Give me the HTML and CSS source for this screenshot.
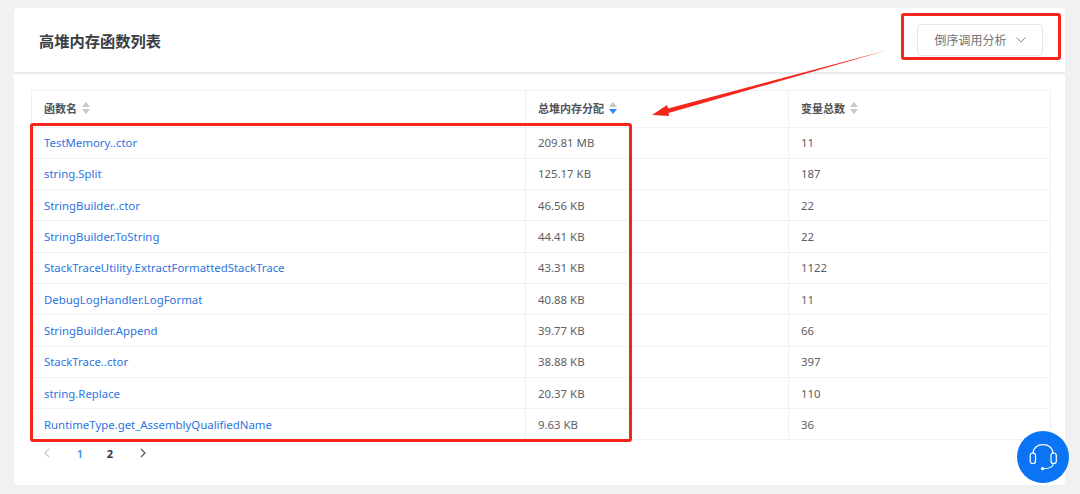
FILE: index.html
```html
<!DOCTYPE html>
<html lang="zh">
<head>
<meta charset="utf-8">
<title>高堆内存函数列表</title>
<link rel="stylesheet" href="styles.css">
</head>
<body>
<main class="card">
  <header class="card-head">
    <h1 class="title">高堆内存函数列表</h1>
    <button class="select" type="button">倒序调用分析
      <svg class="chev" width="10" height="6" viewBox="0 0 10 6"><path d="M.5.5 5 5 9.5.5" fill="none" stroke="#8a8a8a"/></svg>
    </button>
  </header>
  <section class="card-body">
    <table class="table">
      <thead>
        <tr>
          <th class="col-a"><span class="th">函数名<svg class="sort" width="8" height="12" viewBox="0 0 8 12"><path d="M4 0 8 5H0z" fill="#c5c8ce"/><path d="M4 12 0 7h8z" fill="#c5c8ce"/></svg></span></th>
          <th class="col-b"><span class="th">总堆内存分配<svg class="sort" width="8" height="12" viewBox="0 0 8 12"><path d="M4 0 8 5H0z" fill="#c5c8ce"/><path d="M4 12 0 7h8z" fill="#2f86f6"/></svg></span></th>
          <th><span class="th">变量总数<svg class="sort" width="8" height="12" viewBox="0 0 8 12"><path d="M4 0 8 5H0z" fill="#c5c8ce"/><path d="M4 12 0 7h8z" fill="#c5c8ce"/></svg></span></th>
        </tr>
      </thead>
      <tbody>
        <tr><td><a href="#">TestMemory..ctor</a></td><td>209.81 MB</td><td>11</td></tr>
        <tr><td><a href="#">string.Split</a></td><td>125.17 KB</td><td>187</td></tr>
        <tr><td><a href="#">StringBuilder..ctor</a></td><td>46.56 KB</td><td>22</td></tr>
        <tr><td><a href="#">StringBuilder.ToString</a></td><td>44.41 KB</td><td>22</td></tr>
        <tr><td><a href="#">StackTraceUtility.ExtractFormattedStackTrace</a></td><td>43.31 KB</td><td>1122</td></tr>
        <tr><td><a href="#">DebugLogHandler.LogFormat</a></td><td>40.88 KB</td><td>11</td></tr>
        <tr><td><a href="#">StringBuilder.Append</a></td><td>39.77 KB</td><td>66</td></tr>
        <tr><td><a href="#">StackTrace..ctor</a></td><td>38.88 KB</td><td>397</td></tr>
        <tr><td><a href="#">string.Replace</a></td><td>20.37 KB</td><td>110</td></tr>
        <tr><td><a href="#">RuntimeType.get_AssemblyQualifiedName</a></td><td>9.63 KB</td><td>36</td></tr>
      </tbody>
    </table>
    <nav class="pager">
      <span class="page"><svg width="6" height="10" viewBox="0 0 6 10"><path d="M5 1 1 5l4 4" fill="none" stroke="#c4c8cf" stroke-width="1.2"/></svg></span>
      <span class="page num current">1</span>
      <span class="page num strong">2</span>
      <span class="page"><svg width="6" height="10" viewBox="0 0 6 10"><path d="m1 1 4 4-4 4" fill="none" stroke="#555" stroke-width="1.2"/></svg></span>
    </nav>
  </section>
</main>

<div class="mark mark-table"></div>
<div class="mark mark-select"></div>
<svg class="arrow" width="250" height="76" viewBox="0 0 250 76"><path d="M238 2 18 60.500 17 57 2 67 19 68 18.500 65z" fill="#f6261c"/></svg>

<button class="fab" type="button" aria-label="客服">
  <svg width="30" height="30" viewBox="0 0 30 30" fill="none" stroke="#fff" stroke-width="1.200">
    <path d="M5 11.500C5 6 9.500 2.700 15 2.700S25 6 25 11.500"/>
    <rect x="2.200" y="11" width="5.300" height="10.500" rx="2.600"/>
    <rect x="23" y="11" width="5.300" height="10.500" rx="2.600"/>
    <path d="M25.500 21.500c-.5 3.500-4.500 5.200-10.500 5.200"/>
    <circle cx="14.500" cy="26.700" r="1" fill="#fff"/>
  </svg>
</button>
</body>
</html>
```
FILE: styles.css
```css
* { box-sizing: border-box; }
html, body { margin: 0; height: 100%; }
body {
  position: relative;
  padding: 8px 15px 9px 14px;
  background: #f1f1f2;
  font-family: "Noto Sans", "Noto Sans CJK SC", sans-serif;
  font-size: 11.400px;
  color: #5c6066;
  overflow: hidden;
}
.card {
  height: 477px;
  background: #fff;
  border-radius: 4px;
}
.card-head {
  height: 66px;
  padding: 0 22px 0 25px;
  display: flex;
  align-items: center;
  justify-content: space-between;
  border-bottom: 2px solid #e9eaec;
}
.title {
  margin: 0;
  font-size: 15.250px;
  font-weight: 700;
  color: #3a3e44;
}
.select {
  width: 126px;
  height: 32px;
  display: flex;
  align-items: center;
  justify-content: center;
  gap: 9px;
  background: #fff;
  border: 1px solid #e6e7ea;
  border-radius: 3px;
  font: inherit;
  font-size: 12px;
  color: #70747a;
}
.card-body { padding: 16px 14px 0 17px; }
.table {
  width: 1020px;
  table-layout: fixed;
  border-collapse: collapse;
}
.table th, .table td {
  border: 1px solid #f0f1f6;
  padding: 0 12px;
  text-align: left;
}
.table th {
  height: 36.500px;
  padding-bottom: 1px;
  font-weight: 700;
  font-size: 11px;
  color: #50545a;
}
.table td { height: 31.300px; }
.col-a { width: 494px; }
.col-b { width: 263px; }
.th { display: inline-flex; align-items: center; gap: 5px; }
.table a { color: #2b74e2; text-decoration: none; }
.pager { display: flex; height: 26px; align-items: center; }
.page {
  width: 32px;
  display: flex;
  justify-content: center;
  font-size: 11px;
}
.num { width: 30px; }
.current { margin-left: 2px; color: #3d8df0; font-weight: 600; }
.strong { margin-right: 2px; color: #33373d; font-weight: 700; }
.mark {
  position: absolute;
  border: 3px solid #f6261c;
  border-radius: 3px;
}
.mark-table { left: 30px; top: 123px; width: 602px; height: 319px; }
.mark-select { left: 901px; top: 13px; width: 160px; height: 47px; }
.arrow { position: absolute; left: 650px; top: 48px; }
.fab {
  position: absolute;
  left: 1017px;
  top: 431px;
  width: 52px;
  height: 52px;
  padding: 0;
  border: 0;
  border-radius: 50%;
  background: #0a74f5;
  display: flex;
  align-items: center;
  justify-content: center;
}
```
